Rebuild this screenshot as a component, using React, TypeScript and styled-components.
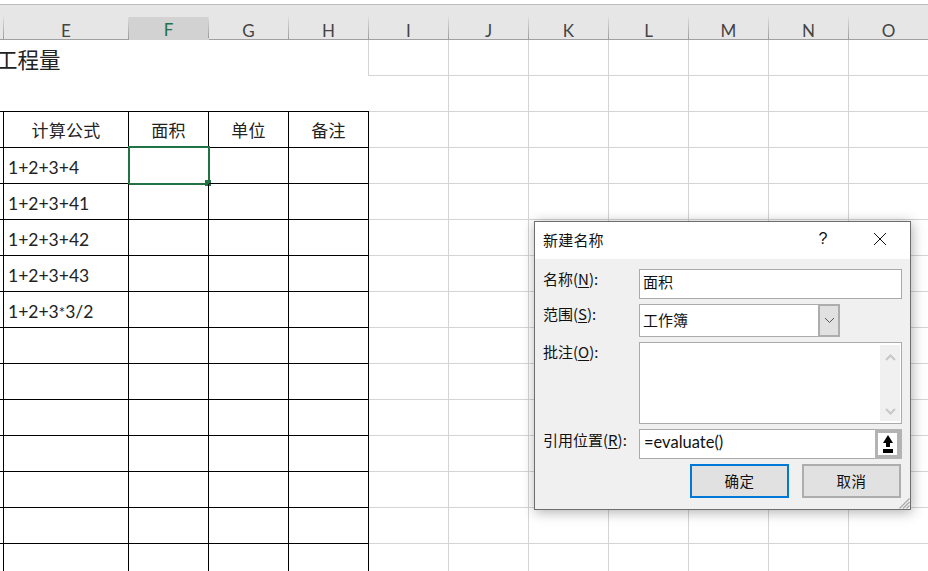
import React from 'react';
import styled, { createGlobalStyle } from 'styled-components';

const GlobalStyle = createGlobalStyle`
  html, body {
    margin: 0;
    padding: 0;
    background: #fff;
  }
  * {
    box-sizing: border-box;
  }
`;

const CJK = `"Noto Sans CJK SC", sans-serif`;
const GRID = '4px 125px repeat(10, 80px)';

const Page = styled.div`
  width: 928px;
  height: 571px;
  overflow: hidden;
  position: relative;
  font-family: "Lato", ${CJK};
  background: #fff;
  padding-top: 4px;
`;

const TopStrip = styled.div`
  height: 13px;
  background: #e6e6e6;
  border-top: 1px solid #bdbdbd;
`;

const ColumnHeader = styled.div`
  display: grid;
  grid-template-columns: ${GRID};
  height: 23px;
  background: #e6e6e6;
  border-bottom: 1px solid #a0a0a0;
`;

const ColumnCell = styled.div<{ $active?: boolean }>`
  display: flex;
  align-items: center;
  justify-content: center;
  height: ${({ $active }) => ($active ? '23px' : '22px')};
  font-size: 17px;
  padding-top: ${({ $active }) => ($active ? '3px' : '5px')};
  color: ${({ $active }) => ($active ? '#217346' : '#444')};
  background: ${({ $active }) => ($active ? '#d2d2d2' : 'transparent')};
  border-bottom: ${({ $active }) => ($active ? '2px solid #217346' : 'none')};
  border-right: 1px solid #aaa;
  border-image: linear-gradient(to bottom, #dcdcdc, #9c9c9c) 0 1 0 0;
`;

const Sheet = styled.div`
  display: grid;
  grid-template-columns: ${GRID};
  grid-auto-rows: 36px;
`;

const Cell = styled.div<{ $line?: 'grey' | 'black' }>`
  position: relative;
  display: flex;
  align-items: center;
  color: #222;
  white-space: nowrap;
  border-right: 1px solid ${({ $line }) => ($line === 'black' ? '#000' : '#d4d4d4')};
  border-bottom: 1px solid ${({ $line }) => ($line === 'black' ? '#000' : '#d4d4d4')};
`;

const HeadCell = styled(Cell)`
  justify-content: center;
  font-size: 17px;
  letter-spacing: 0.2px;
`;

const FormulaCell = styled(Cell)`
  padding: 3px 0 0 4px;
  font-size: 17.5px;
`;

const FormulaStar = styled.span`
  font-size: 15px;
`;

const TitleCell = styled.div`
  grid-column: 1 / span 5;
  display: flex;
  align-items: center;
  border-right: 1px solid #d4d4d4;
  overflow: hidden;
  font-size: 21.5px;
  color: #222;
  white-space: nowrap;
`;

const TitleText = styled.span`
  margin-left: -4px;
`;

const BlankSpan = styled.div`
  grid-column: 1 / span 5;
  border-bottom: 1px solid #000;
`;

const SelectionBox = styled.div`
  position: absolute;
  left: -1px;
  top: -2px;
  width: 82px;
  height: 39px;
  border: 2px solid #217346;
`;

const FillHandle = styled.div`
  position: absolute;
  right: -3px;
  bottom: -3px;
  width: 6px;
  height: 6px;
  background: #217346;
`;

const Dialog = styled.div`
  position: absolute;
  left: 534px;
  top: 221px;
  width: 377px;
  height: 289px;
  background: #f0f0f0;
  border: 1px solid #6e6e6e;
  box-shadow: 1px 2px 12px rgba(0, 0, 0, 0.32);
  font-family: "Noto Sans CJK SC", sans-serif;
  color: #111;
`;

const TitleBar = styled.div`
  display: flex;
  align-items: center;
  height: 37px;
  padding: 0 0 3px 8px;
  background: #fff;
  font-size: 15px;
`;

const DialogTitle = styled.span`
  flex: 1;
  letter-spacing: 0.2px;
`;

const HelpMark = styled.span`
  width: 30px;
  text-align: center;
  font-family: "Liberation Sans", sans-serif;
  font-size: 16px;
  margin-right: 35px;
`;

const CloseButton = styled.button`
  display: flex;
  align-items: center;
  justify-content: center;
  width: 14px;
  height: 14px;
  padding: 0;
  margin-right: 23px;
  border: none;
  background: none;
`;

const DialogBody = styled.div`
  display: grid;
  grid-template-columns: 96px 263px;
  grid-template-rows: 30px 33px 82px 30px;
  row-gap: 5px;
  padding: 10px 0 0 8px;
`;

const FieldLabel = styled.label`
  font-size: 15px;
  line-height: 20px;
  white-space: nowrap;

  u {
    text-underline-offset: 2px;
  }
`;

const RefLabel = styled(FieldLabel)`
  padding-top: 1px;
`;

const TextField = styled.div`
  display: flex;
  align-items: center;
  padding: 0 2px 5px 3px;
  background: #fff;
  border: 1px solid #ababab;
  font-size: 15px;
  color: #111;
`;

const SelectRow = styled.div`
  display: flex;
  width: 201px;
`;

const SelectValue = styled(TextField)`
  flex: 1;
  border-right: none;
  padding-bottom: 3px;
`;

const SelectArrow = styled.div`
  display: flex;
  align-items: center;
  justify-content: center;
  width: 22px;
  background: #e1e1e1;
  border: 2px solid #adadad;
`;

const NoteField = styled.div`
  display: flex;
  justify-content: flex-end;
  padding: 2px 1px 2px 0;
  background: #fff;
  border: 1px solid #ababab;
`;

const Scrollbar = styled.div`
  display: flex;
  flex-direction: column;
  align-items: center;
  justify-content: space-between;
  width: 20px;
  padding: 9px 0 6px;
  background: #f0f0f0;
`;

const RefRow = styled.div`
  display: flex;
`;

const RefValue = styled(TextField)`
  flex: 1;
  border-right: none;
  padding: 0 0 4px 4px;
  font-family: "Lato", ${CJK};
  font-size: 16.5px;
`;

const RefButton = styled.div`
  display: flex;
  align-items: center;
  justify-content: center;
  width: 27px;
  background: #fff;
  border: solid #b3b3b3;
  border-width: 4px 5px 4px 3px;
`;

const Buttons = styled.div`
  display: flex;
  justify-content: flex-end;
  gap: 13px;
  margin: 5px 9px 0 0;
`;

const DialogButton = styled.button<{ $primary?: boolean }>`
  width: 99px;
  height: 34px;
  padding: 0 0 2px;
  background: #e1e1e1;
  border: 2px solid ${({ $primary }) => ($primary ? '#0078d7' : '#adadad')};
  font-family: "Noto Sans CJK SC", sans-serif;
  font-size: 14.5px;
  letter-spacing: 0.5px;
  color: #111;
`;

const ResizeGrip = styled.svg`
  position: absolute;
  right: 0;
  bottom: 0;
`;

const columns = ['E', 'F', 'G', 'H', 'I', 'J', 'K', 'L', 'M', 'N', 'O'];
const outside = columns.slice(4);
const headings = ['计算公式', '面积', '单位', '备注'];
const formulas = ['1+2+3+4', '1+2+3+41', '1+2+3+42', '1+2+3+43', '1+2+3*3/2'];
const blankRows = [0, 1, 2, 3, 4, 5, 6];

const Chevron = ({ up, color, weight = 1 }: { up?: boolean; color: string; weight?: number }) => (
  <svg width="11" height="7" viewBox="0 0 11 7">
    <path d={up ? 'M1 6 5.5 1.5 10 6' : 'M1 1 5.5 5.5 10 1'} fill="none" stroke={color} strokeWidth={weight} />
  </svg>
);

const GreyCells = ({ names }: { names: string[] }) => (
  <>
    {names.map((name) => (
      <Cell key={name} />
    ))}
  </>
);

const Formula = ({ text }: { text: string }) => {
  const [before, after] = text.split('*');
  if (after === undefined) return <span>{text}</span>;
  return (
    <span>
      {before}
      <FormulaStar>*</FormulaStar>
      {after}
    </span>
  );
};

const App: React.FC = () => {
  return (
    <Page>
      <GlobalStyle />
      <TopStrip />
      <ColumnHeader>
        <ColumnCell />
        {columns.map((name) => (
          <ColumnCell key={name} $active={name === 'F'}>
            {name}
          </ColumnCell>
        ))}
      </ColumnHeader>

      <Sheet>
        <TitleCell>
          <TitleText>工程量</TitleText>
        </TitleCell>
        <GreyCells names={outside} />

        <BlankSpan />
        <GreyCells names={outside} />

        <Cell $line="black" />
        {headings.map((text) => (
          <HeadCell key={text} $line="black">
            {text}
          </HeadCell>
        ))}
        <GreyCells names={outside} />

        {formulas.map((formula, i) => (
          <React.Fragment key={formula}>
            <Cell $line="black" />
            <FormulaCell $line="black">
              <Formula text={formula} />
            </FormulaCell>
            <Cell $line="black">
              {i === 0 && (
                <SelectionBox>
                  <FillHandle />
                </SelectionBox>
              )}
            </Cell>
            <Cell $line="black" />
            <Cell $line="black" />
            <GreyCells names={outside} />
          </React.Fragment>
        ))}

        {blankRows.map((row) => (
          <React.Fragment key={row}>
            <Cell $line="black" />
            <Cell $line="black" />
            <Cell $line="black" />
            <Cell $line="black" />
            <Cell $line="black" />
            <GreyCells names={outside} />
          </React.Fragment>
        ))}
      </Sheet>

      <Dialog>
        <TitleBar>
          <DialogTitle>新建名称</DialogTitle>
          <HelpMark>?</HelpMark>
          <CloseButton>
            <svg width="14" height="14" viewBox="0 0 14 14">
              <path d="M1 1 13 13M13 1 1 13" stroke="#111" strokeWidth="1" fill="none" />
            </svg>
          </CloseButton>
        </TitleBar>
        <DialogBody>
          <FieldLabel>
            名称(<u>N</u>):
          </FieldLabel>
          <TextField>面积</TextField>

          <FieldLabel>
            范围(<u>S</u>):
          </FieldLabel>
          <SelectRow>
            <SelectValue>工作簿</SelectValue>
            <SelectArrow>
              <Chevron color="#555" />
            </SelectArrow>
          </SelectRow>

          <FieldLabel>
            批注(<u>O</u>):
          </FieldLabel>
          <NoteField>
            <Scrollbar>
              <Chevron up color="#c8c8c8" weight={2} />
              <Chevron color="#c8c8c8" weight={2} />
            </Scrollbar>
          </NoteField>

          <RefLabel>
            引用位置(<u>R</u>):
          </RefLabel>
          <RefRow>
            <RefValue>=evaluate()</RefValue>
            <RefButton>
              <svg width="10" height="18" viewBox="0 0 10 18">
                <path d="M5 0 10 8H7V12H3V8H0ZM0 14H10V18H0Z" fill="#000" />
              </svg>
            </RefButton>
          </RefRow>
        </DialogBody>
        <Buttons>
          <DialogButton $primary>确定</DialogButton>
          <DialogButton>取消</DialogButton>
        </Buttons>
        <ResizeGrip width="11" height="11" viewBox="0 0 11 11">
          <path d="M10.5 .5 .5 10.5M10.5 4 4 10.5M10.5 7.5 7.5 10.5" stroke="#a8a8a8" strokeWidth="1.2" fill="none" />
        </ResizeGrip>
      </Dialog>
    </Page>
  );
};

export default App;
